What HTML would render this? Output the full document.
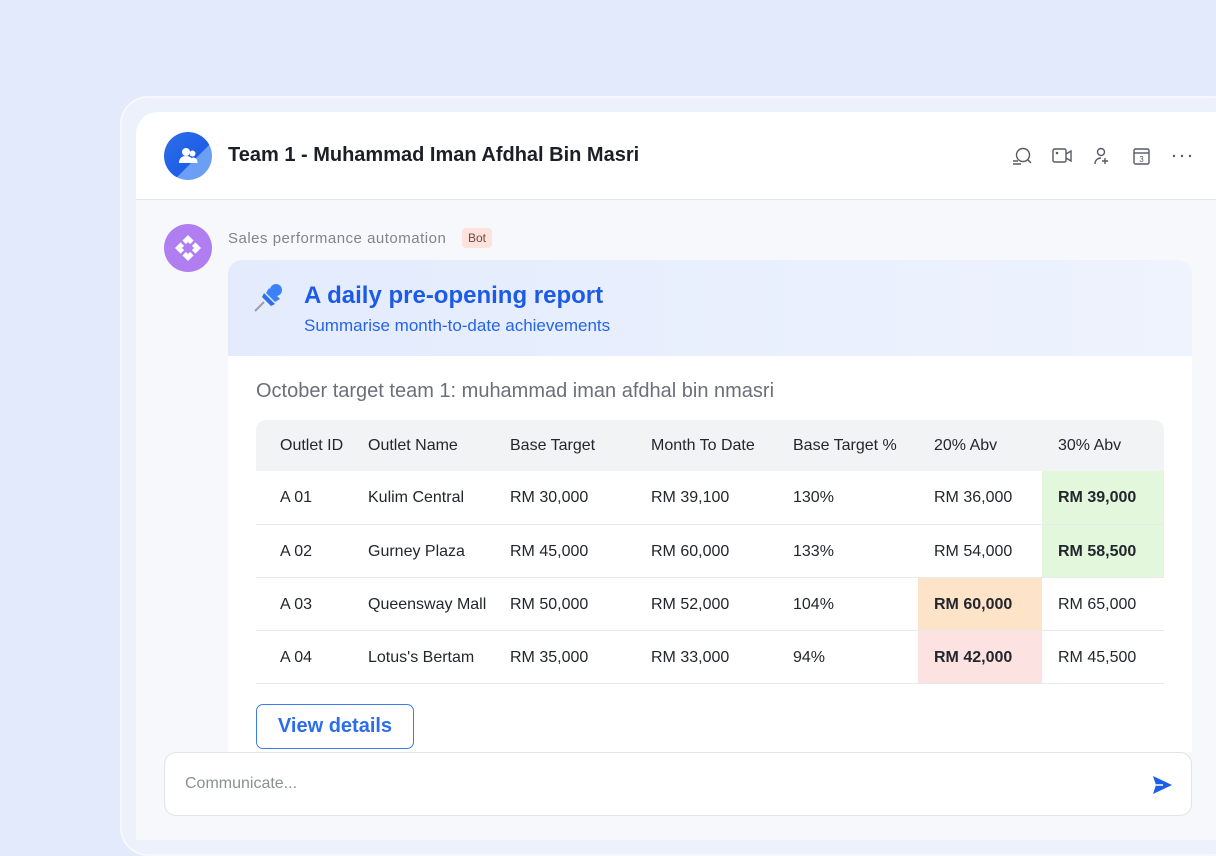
<!DOCTYPE html>
<html><head><meta charset="utf-8"><style>
*{box-sizing:border-box;margin:0;padding:0}
body{width:1216px;height:840px;overflow:hidden;background:#e3eafb;font-family:"Liberation Sans",sans-serif;position:relative}
.outer{position:absolute;left:120px;top:96px;width:1120px;height:760px;border-radius:28px;background:#ecf1fc;border:2px solid #f6f8fe}
.inner{position:absolute;left:136px;top:112px;width:1100px;height:728px;border-radius:22px 0 0 0;background:#f6f8fc;overflow:hidden}
.hdr{position:absolute;left:0;top:0;right:0;height:88px;background:#fff;border-bottom:1px solid #e5e7eb}
.av{position:absolute;left:28px;top:20px;width:48px;height:48px;border-radius:50%;background:linear-gradient(135deg,#2f6fe8 0%,#1d5ee6 60%,#6a9ff5 61%)}
.title{position:absolute;left:92px;top:32px;font-size:20px;font-weight:bold;color:#1c1f26}
.icons{position:absolute;left:874px;top:34px}
.bot{position:absolute;left:28px;top:112px;width:48px;height:48px;border-radius:50%;background:#b07ef0}
.name{position:absolute;left:92px;top:118px;font-size:15px;color:#80848c;letter-spacing:.5px}
.tag{position:absolute;left:326px;top:116px;background:#fde3dc;color:#6b4b44;font-size:12px;padding:3px 6px;border-radius:4px}
.card{position:absolute;left:92px;top:148px;width:964px;height:492px;background:#fff;border-radius:14px 14px 0 0;overflow:hidden}
.ch{height:96px;background:linear-gradient(90deg,#e3ebfd,#eef3fd);position:relative}
.ch h2{position:absolute;left:76px;top:22px;font-size:24px;color:#1d5be6;font-weight:bold}
.ch p{position:absolute;left:76px;top:56px;font-size:17px;color:#2563eb}
.sub{position:absolute;left:28px;top:120px;font-size:20px;color:#6b6f78}
table{position:absolute;left:28px;top:160px;width:908px;border-collapse:collapse;font-size:16px;color:#23262d;table-layout:fixed}
th{height:51px;background:#f2f3f5;font-weight:normal;text-align:left;color:#23262d}
td{height:53px;border-bottom:1px solid #e8e9ec;white-space:nowrap;padding-top:2px}
th:first-child,td:first-child{padding-left:24px}
.g{background:#e3f7dc;font-weight:bold;padding-left:16px}
.o{background:#fde3c8;font-weight:bold;padding-left:16px}
.r{background:#fde2e2;font-weight:bold;padding-left:16px}
.p16{padding-left:16px}
.btn{position:absolute;left:28px;top:444px;width:158px;height:45px;border:1.5px solid #3b7bf0;border-radius:7px;color:#2b6ded;font-size:20px;font-weight:bold;text-align:center;line-height:42px;background:#fff}
.inp{position:absolute;left:28px;top:640px;width:1028px;height:64px;background:#fff;border:1px solid #e2e4e8;border-radius:12px}
.inp span{position:absolute;left:20px;top:22px;font-size:16px;color:#8b8f96}
</style></head><body>
<div class="outer"></div>
<div class="inner">
 <div class="hdr">
  <div class="av"><svg width="48" height="48" viewBox="0 0 48 48"><circle cx="22" cy="20" r="4" fill="#fff"/><circle cx="28.5" cy="21.5" r="3" fill="#fff"/><path d="M15 31c0-5 3-7 7-7s7 2 7 7z" fill="#fff"/><path d="M27 31c0-3 0-5 2-5.5 3 0 4.5 2 4.5 5.5z" fill="#fff"/></svg></div>
  <div class="title">Team 1 - Muhammad Iman Afdhal Bin Masri</div>
  <svg class="icons" width="200" height="24" viewBox="0 0 200 24" fill="none" stroke="#555a63" stroke-width="1.4">
   <circle cx="13" cy="9" r="6.5"/><path d="M17.5 13.5l3.5 3.5M3 15h5M3 18h8"/>
   <rect x="43" y="3" width="13" height="13" rx="1.5"/><path d="M56 8l5-3v10l-5-3"/><circle cx="47" cy="7" r=".6" fill="#555a63"/>
   <circle cx="91" cy="6" r="3.5"/><path d="M85 18c0-4 3-6 6-6M95 12v6M92 15h6"/>
   <rect x="124" y="3" width="15" height="15" rx="1.5"/><path d="M124 7h15"/><text x="131.5" y="16" font-size="8" fill="#555a63" stroke="none" text-anchor="middle">3</text>
   <circle cx="164" cy="10" r="1.2" fill="#555a63" stroke="none"/><circle cx="172" cy="10" r="1.2" fill="#555a63" stroke="none"/><circle cx="180" cy="10" r="1.2" fill="#555a63" stroke="none"/>
  </svg>
 </div>
 <div class="bot"><svg width="48" height="48" viewBox="0 0 48 48"><path d="M24 11l13 13-13 13-13-13z" fill="#fff"/><path d="M24 18l6 6-6 6-6-6z" fill="#b07ef0"/><path d="M17 17l14 14M31 17L17 31" stroke="#b07ef0" stroke-width="2.5"/></svg></div>
 <div class="name">Sales performance automation</div>
 <div class="tag">Bot</div>
 <div class="card">
  <div class="ch">
   <svg style="position:absolute;left:24px;top:20px" width="36" height="36" viewBox="0 0 36 36"><path d="M3 31l9-9" stroke="#9aa0a8" stroke-width="2"/><path d="M12 13l11 11-4 2-9-9z" fill="#2f6fe8"/><path d="M17 8l11 11-5 3-9-9z" fill="#3b82f6"/><circle cx="24" cy="10" r="6" fill="#3b82f6"/></svg>
   <h2>A daily pre-opening report</h2>
   <p>Summarise month-to-date achievements</p>
  </div>
  <div class="sub">October target team 1: muhammad iman afdhal bin nmasri</div>
  <table>
   <colgroup><col style="width:112px"><col style="width:142px"><col style="width:141px"><col style="width:142px"><col style="width:125px"><col style="width:124px"><col style="width:122px"></colgroup>
   <tr><th style="border-radius:10px 0 0 0">Outlet ID</th><th>Outlet Name</th><th>Base Target</th><th>Month To Date</th><th>Base Target %</th><th class="p16">20% Abv</th><th class="p16" style="border-radius:0 10px 0 0">30% Abv</th></tr>
   <tr><td>A 01</td><td>Kulim Central</td><td>RM 30,000</td><td>RM 39,100</td><td>130%</td><td class="p16">RM 36,000</td><td class="g">RM 39,000</td></tr>
   <tr><td>A 02</td><td>Gurney Plaza</td><td>RM 45,000</td><td>RM 60,000</td><td>133%</td><td class="p16">RM 54,000</td><td class="g">RM 58,500</td></tr>
   <tr><td>A 03</td><td>Queensway Mall</td><td>RM 50,000</td><td>RM 52,000</td><td>104%</td><td class="o">RM 60,000</td><td class="p16">RM 65,000</td></tr>
   <tr><td>A 04</td><td>Lotus's Bertam</td><td>RM 35,000</td><td>RM 33,000</td><td>94%</td><td class="r">RM 42,000</td><td class="p16">RM 45,500</td></tr>
  </table>
  <div class="btn">View details</div>
 </div>
 <div class="inp"><span>Communicate...</span>
  <svg style="position:absolute;right:18px;top:21px" width="22" height="22" viewBox="0 0 22 22"><path d="M2 2l19 9-19 9 3-9z" fill="#1d5ee6"/><path d="M5 11h7" stroke="#fff" stroke-width="1.5"/></svg>
 </div>
</div>
</body></html>
